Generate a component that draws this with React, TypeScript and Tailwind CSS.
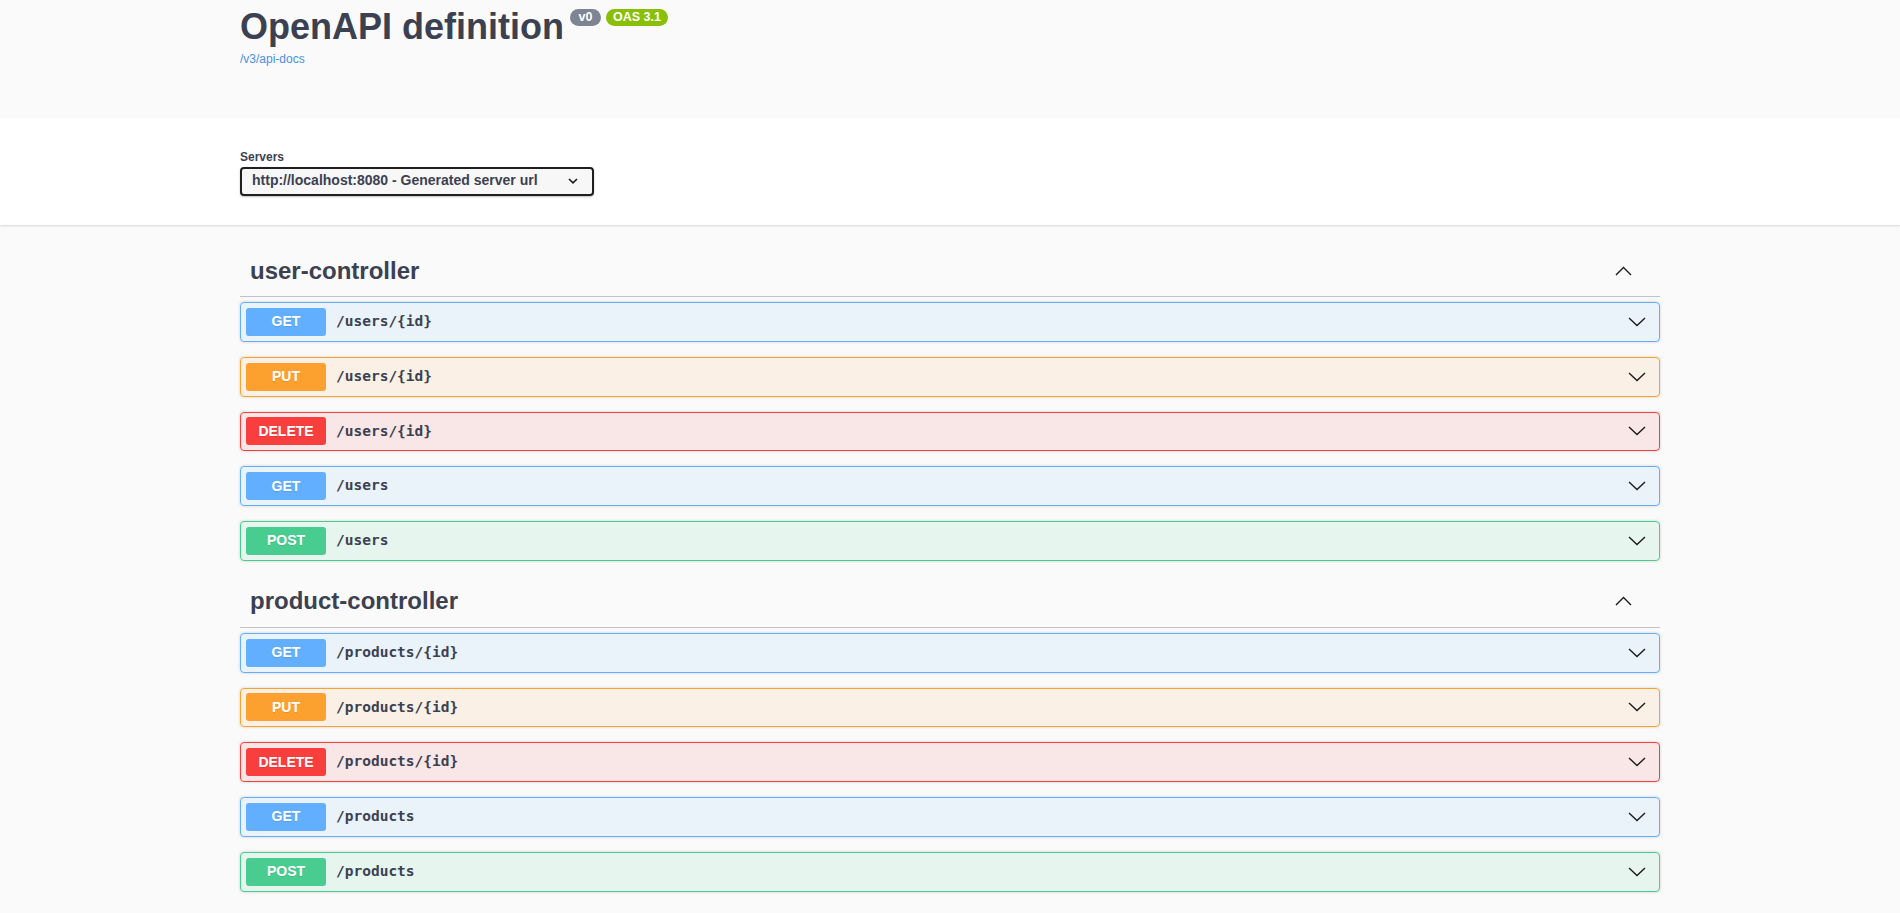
import React from 'react';

type Method = 'GET' | 'PUT' | 'DELETE' | 'POST';

// colores de cada método, igual que en swagger-ui
const methodStyles: Record<Method, { box: string; badge: string }> = {
  GET: { box: 'border-[#61affe] bg-[rgba(97,175,254,0.1)]', badge: 'bg-[#61affe]' },
  PUT: { box: 'border-[#fca130] bg-[rgba(252,161,48,0.1)]', badge: 'bg-[#fca130]' },
  DELETE: { box: 'border-[#f93e3e] bg-[rgba(249,62,62,0.1)]', badge: 'bg-[#f93e3e]' },
  POST: { box: 'border-[#49cc90] bg-[rgba(73,204,144,0.1)]', badge: 'bg-[#49cc90]' },
};

const sections: { tag: string; ops: { method: Method; path: string }[] }[] = [
  {
    tag: 'user-controller',
    ops: [
      { method: 'GET', path: '/users/{id}' },
      { method: 'PUT', path: '/users/{id}' },
      { method: 'DELETE', path: '/users/{id}' },
      { method: 'GET', path: '/users' },
      { method: 'POST', path: '/users' },
    ],
  },
  {
    tag: 'product-controller',
    ops: [
      { method: 'GET', path: '/products/{id}' },
      { method: 'PUT', path: '/products/{id}' },
      { method: 'DELETE', path: '/products/{id}' },
      { method: 'GET', path: '/products' },
      { method: 'POST', path: '/products' },
    ],
  },
];

function ChevronUp() {
  return (
    <svg width="17" height="10" viewBox="0 0 17 10" fill="none">
      <polyline points="1,9 8.5,1.5 16,9" stroke="#1b1b1b" strokeWidth="1.4" />
    </svg>
  );
}

function ChevronDown() {
  return (
    <svg width="18" height="10" viewBox="0 0 18 10" fill="none">
      <polyline points="1,1 9,8.5 17,1" stroke="#1b1b1b" strokeWidth="1.4" />
    </svg>
  );
}

function OpBlock({ method, path }: { method: Method; path: string }) {
  const s = methodStyles[method];
  return (
    <div
      className={`mb-[15px] flex h-[39.75px] items-center rounded-[4px] border pl-[5px] pr-[13px] shadow-[0_0_3px_rgba(0,0,0,0.19)] ${s.box}`}
    >
      <span
        className={`flex h-[28px] w-[80px] items-center justify-center rounded-[3px] text-[14px] font-bold text-white [text-shadow:0_1px_0_rgba(0,0,0,0.1)] ${s.badge}`}
      >
        {method}
      </span>
      <span className="pl-[10px] font-['DejaVu_Sans_Mono','Liberation_Mono',monospace] text-[14.5px] font-bold text-[#3b4151]">
        {path}
      </span>
      <span className="ml-auto flex items-center">
        <ChevronDown />
      </span>
    </div>
  );
}

export default function App() {
  return (
    <div className="min-h-screen bg-[#fafafa] font-['Liberation_Sans',Arial,sans-serif] text-[#3b4151]">
      {/* info */}
      <div className="mx-auto h-[118px] max-w-[1460px] px-5 pt-[6px]">
        <div className="flex items-start">
          <h2 className="text-[36px] font-bold leading-[41px]">OpenAPI definition</h2>
          <div className="ml-[6px] mt-[3px] flex gap-[5px]">
            <span className="flex h-[17px] w-[31px] items-center justify-center rounded-full bg-[#7d8492] text-[12.5px] font-bold leading-none text-white">
              v0
            </span>
            <span className="flex h-[17px] w-[62px] items-center justify-center rounded-full bg-[#89bf04] text-[12.5px] font-bold leading-none text-white">
              OAS 3.1
            </span>
          </div>
        </div>
        <a className="mt-[5px] block text-[12px] leading-[14px] text-[#4990e2]">/v3/api-docs</a>
      </div>

      {/* servers */}
      <div className="h-[107px] bg-white shadow-[0_1px_2px_0_rgba(0,0,0,0.15)]">
        <div className="mx-auto max-w-[1460px] px-5 pt-[32px]">
          <div className="text-[12px] font-bold leading-[14px]">Servers</div>
          <div className="mt-[3px] flex h-[29px] w-[354px] items-start rounded-[4px] border-2 border-[#1f1f1f] bg-[#f7f7f7] pl-[10px] pr-[14px] pt-[3px] shadow-[0_1px_2px_0_rgba(0,0,0,0.25)]">
            <span className="text-[14px] font-bold leading-[16px]">http://localhost:8080 - Generated server url</span>
            <svg className="ml-auto mt-[6px]" width="10" height="6" viewBox="0 0 10 6" fill="none">
              <polyline points="1,1 5,4.8 9,1" stroke="#1b1b1b" strokeWidth="1.6" />
            </svg>
          </div>
        </div>
      </div>

      {/* tags */}
      <div className="mx-auto max-w-[1460px] px-5 pt-[20px]">
        {sections.map((sec) => (
          <div key={sec.tag}>
            <div className="mb-[5px] flex h-[52px] items-center border-b border-[rgba(59,65,81,0.3)] pl-[10px] pr-[28px]">
              <h3 className="text-[24px] font-bold leading-[28px]">{sec.tag}</h3>
              <span className="ml-auto flex items-center">
                <ChevronUp />
              </span>
            </div>
            {sec.ops.map((op, i) => (
              <OpBlock key={i} method={op.method} path={op.path} />
            ))}
          </div>
        ))}
      </div>
    </div>
  );
}
